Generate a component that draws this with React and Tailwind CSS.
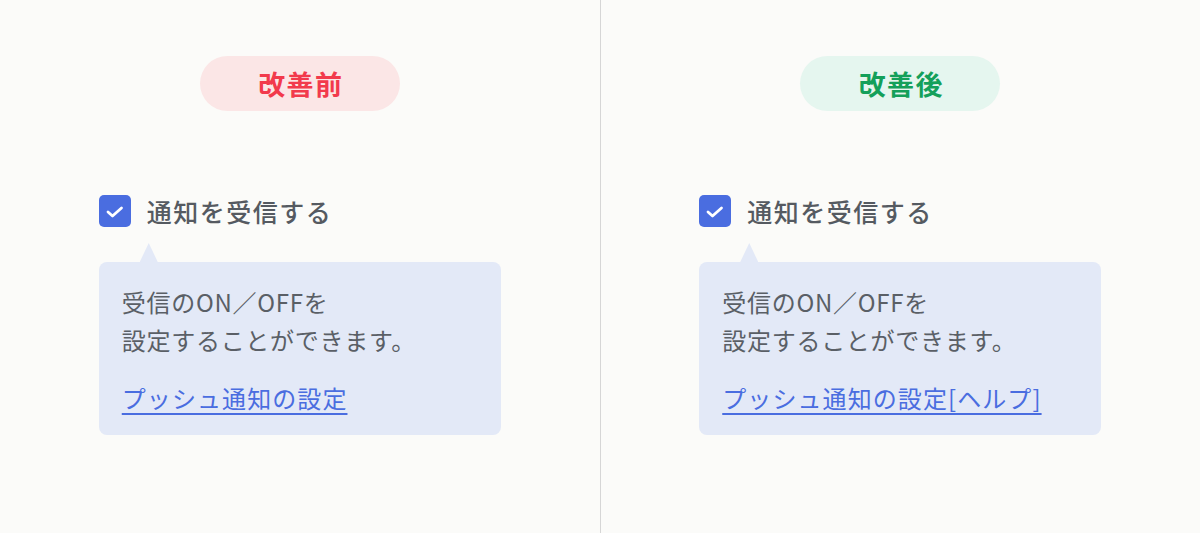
import React from 'react';

const font = { fontFamily: '"Noto Sans CJK JP", "Noto Sans", sans-serif' };

const Panel = ({ label, pillClass, textClass, linkText, border }) => (
  <div className={`flex-1 flex flex-col items-center pt-[56px] ${border ? 'border-l border-[#d6d6d6]' : ''}`}>
    <div className={`w-[200px] h-[55px] rounded-full flex items-center justify-center ${pillClass}`}>
      <span className={`text-[27px] font-bold tracking-[0.05em] pl-[2px] leading-none ${textClass}`}>{label}</span>
    </div>

    <div className="w-[402px] mt-[84px]">
      {/* checkbox row */}
      <div className="flex items-center h-[32px]">
        <div className="w-[32px] h-[32px] rounded-[5px] bg-[#4a6de0] flex items-center justify-center">
          <svg width="32" height="32" viewBox="0 0 32 32" fill="none">
            <polyline points="9,17 13.5,21 22.5,13" stroke="white" strokeWidth="2.8" strokeLinecap="round" strokeLinejoin="round" />
          </svg>
        </div>
        <span className="ml-[16px] text-[25px] font-medium tracking-[0.06em] text-[#555a61] leading-none">通知を受信する</span>
      </div>

      {/* tooltip */}
      <div className="mt-[16px] pl-[41px] h-[19px] flex">
        <div className="w-[18px] h-[19px] bg-[#e3e9f7] [clip-path:polygon(50%_0,100%_100%,0_100%)]" />
      </div>
      <div className="bg-[#e3e9f7] rounded-[8px] pl-[23px] pr-4 pt-[21px] pb-[18px]">
        <p className="text-[24px] leading-[38px] tracking-[0.03em] text-[#5a5f66]">
          受信のON／OFFを
          <br />
          設定することができます。
        </p>
        <a href="#" className="block mt-[20px] text-[24px] leading-[38px] tracking-[0.045em] text-[#4a6de0] underline underline-offset-[5px] decoration-[1.5px]">
          {linkText}
        </a>
      </div>
    </div>
  </div>
);

const App = () => {
  return (
    <div className="w-[1200px] h-[533px] bg-[#fbfbf9] flex" style={font}>
      <Panel
        label="改善前"
        pillClass="bg-[#fbe6e6]"
        textClass="text-[#f23a4c]"
        linkText="プッシュ通知の設定"
      />
      <Panel
        label="改善後"
        pillClass="bg-[#e5f6ef]"
        textClass="text-[#14a05a]"
        linkText="プッシュ通知の設定[ヘルプ]"
        border
      />
    </div>
  );
};

export default App;
